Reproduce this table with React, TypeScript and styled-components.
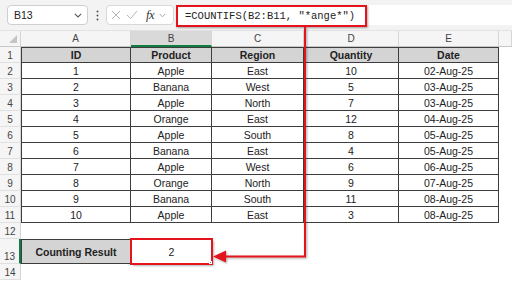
import React from "react";
import styled, { createGlobalStyle, css } from "styled-components";

const GlobalStyle = createGlobalStyle`
  html, body { margin: 0; padding: 0; background: #ffffff; }
  body { font-family: "Liberation Sans", Arial, sans-serif; color: #222; }
  * { box-sizing: border-box; }
`;

const Page = styled.div`
  position: relative;
  width: 512px;
  height: 281px;
  overflow: hidden;
  background: #fff;
`;

const FormulaBar = styled.div`
  height: 31px;
  display: flex;
  align-items: flex-start;
  padding: 5px 0 0 7px;
  background: #f3f3f3;
  border-bottom: 1px solid #e2e2e2;
`;

const NameBox = styled.div`
  width: 81px;
  height: 20px;
  background: #fff;
  border: 1px solid #cfcfcf;
  border-radius: 4px;
  display: flex;
  align-items: center;
  justify-content: space-between;
  padding: 0 5px 0 6px;
  font-size: 10.5px;
  color: #222;
`;

const Dots = styled.div`
  width: 18px;
  height: 20px;
  display: flex;
  align-items: center;
  justify-content: center;
`;

const EditBox = styled.div`
  width: 68px;
  height: 20px;
  background: #fff;
  border: 1px solid #d8d8d8;
  border-radius: 4px;
  display: flex;
  align-items: center;
  padding: 0 3px 0 4px;
  gap: 5px;
`;

const Fx = styled.span`
  font-family: "Liberation Serif", "Times New Roman", serif;
  font-style: italic;
  font-size: 12.5px;
  color: #333;
  margin-left: 3px;
  letter-spacing: -0.5px;
`;

const FormulaInput = styled.div`
  flex: 1;
  margin-left: 2px;
  height: 20px;
  background: #fff;
  border-radius: 4px 0 0 4px;
  display: flex;
  align-items: flex-start;
`;

const Highlight = styled.div`
  width: 191px;
  height: 22px;
  margin-left: 0;
  border: 2px solid #e5141c;
  box-shadow: 1px 1px 2px rgba(0, 0, 0, 0.35);
  background: #fff;
  display: flex;
  align-items: center;
  padding-left: 7px;
  font-family: "Liberation Mono", "Courier New", monospace;
  font-size: 10.5px;
  color: #222;
  white-space: pre;
`;

const Sheet = styled.div`
  display: grid;
  grid-template-columns: 21px 110px 81px 92px 95px 100px 1fr;
  grid-template-rows: 16px repeat(12, 16px) 25px 16px;
`;

const Corner = styled.div`
  position: relative;
  background: #f5f5f5;
  border-right: 1px solid #d4d4d4;
  border-bottom: 1px solid #c8c8c8;
  display: flex;
  align-items: flex-end;
  justify-content: flex-end;
  padding: 0 3px 3px 0;
`;

const ColHead = styled.div<{ $active?: boolean }>`
  background: ${(p) => (p.$active ? "#d9d9d9" : "#f5f5f5")};
  border-right: 1px solid #d6d6d6;
  border-bottom: ${(p) => (p.$active ? "2px solid #107c41" : "1px solid #c8c8c8")};
  display: flex;
  align-items: center;
  justify-content: center;
  font-size: 10px;
  color: #444;
`;

const RowHead = styled.div<{ $active?: boolean }>`
  background: #f5f5f5;
  border-right: ${(p) => (p.$active ? "2px solid #107c41" : "1px solid #d4d4d4")};
  border-bottom: 1px solid #e0e0e0;
  display: flex;
  align-items: flex-end;
  justify-content: center;
  padding-bottom: 1px;
  font-size: 10px;
  color: #444;
`;

type Kind = "th" | "td" | "blank" | "label" | "result";

const Cell = styled.div<{ $kind: Kind; $first?: boolean; $top?: boolean }>`
  display: flex;
  align-items: center;
  justify-content: center;
  font-size: 10.5px;
  color: #222;
  white-space: nowrap;
  ${(p) =>
    (p.$kind === "th" || p.$kind === "td") &&
    css`
      border-right: 1px solid #3d3d3d;
      border-bottom: 1px solid #3d3d3d;
      ${p.$first && "border-left: 1px solid #3d3d3d;"}
      ${p.$top && "border-top: 1px solid #3d3d3d;"}
    `}
  ${(p) =>
    (p.$kind === "th" || p.$kind === "label") &&
    css`
      background: #d4d4d4;
      font-weight: bold;
    `}
  ${(p) =>
    p.$kind === "label" &&
    css`
      border: 1px solid #3d3d3d;
    `}
  ${(p) =>
    p.$kind === "result" &&
    css`
      position: relative;
      background: #fff;
      outline: 2px solid #e5141c;
      outline-offset: -1px;
      box-shadow: 2px 2px 2px rgba(0, 0, 0, 0.3);
    `}
`;

const FillHandle = styled.span`
  position: absolute;
  right: 0px;
  bottom: 0px;
  width: 3px;
  height: 3px;
  background: #7a7a7a;
  border: 0.5px solid #fff;
`;

const Overlay = styled.svg`
  position: absolute;
  left: 0;
  top: 0;
  pointer-events: none;
  filter: drop-shadow(1px 1px 1px rgba(0, 0, 0, 0.35));
`;

const cols = ["A", "B", "C", "D", "E", ""];
const header = ["ID", "Product", "Region", "Quantity", "Date"];
const data: [number, string, string, number, string][] = [
  [1, "Apple", "East", 10, "02-Aug-25"],
  [2, "Banana", "West", 5, "03-Aug-25"],
  [3, "Apple", "North", 7, "03-Aug-25"],
  [4, "Orange", "East", 12, "04-Aug-25"],
  [5, "Apple", "South", 8, "05-Aug-25"],
  [6, "Banana", "East", 4, "05-Aug-25"],
  [7, "Apple", "West", 6, "06-Aug-25"],
  [8, "Orange", "North", 9, "07-Aug-25"],
  [9, "Banana", "South", 11, "08-Aug-25"],
  [10, "Apple", "East", 3, "08-Aug-25"],
];

const Chevron = () => (
  <svg width="8" height="5" viewBox="0 0 8 5">
    <path d="M0.8 0.8 L4 4 L7.2 0.8" fill="none" stroke="#555" strokeWidth="1.1" />
  </svg>
);

export default function App() {
  return (
    <Page>
      <GlobalStyle />
      <FormulaBar>
        <NameBox>
          <span>B13</span>
          <Chevron />
        </NameBox>
        <Dots>
          <svg width="3" height="11" viewBox="0 0 3 11">
            <circle cx="1.5" cy="1.5" r="1" fill="#555" />
            <circle cx="1.5" cy="5.5" r="1" fill="#555" />
            <circle cx="1.5" cy="9.5" r="1" fill="#555" />
          </svg>
        </Dots>
        <EditBox>
          <svg width="10" height="10" viewBox="0 0 10 10">
            <path d="M1 1 L9 9 M9 1 L1 9" stroke="#b5b5b5" strokeWidth="1" />
          </svg>
          <svg width="12" height="10" viewBox="0 0 12 10">
            <path d="M1 5 L4.5 8.5 L11 1" fill="none" stroke="#b5b5b5" strokeWidth="1" />
          </svg>
          <Fx>fx</Fx>
          <svg width="7" height="5" viewBox="0 0 8 5">
            <path d="M0.8 0.8 L4 4 L7.2 0.8" fill="none" stroke="#999" strokeWidth="1" />
          </svg>
        </EditBox>
        <FormulaInput>
          <Highlight>=COUNTIFS(B2:B11, "*ange*")</Highlight>
        </FormulaInput>
      </FormulaBar>
      <Sheet>
        <Corner>
          <svg width="8" height="8" viewBox="0 0 8 8">
            <polygon points="8,0 8,8 0,8" fill="#c4c4c4" />
          </svg>
        </Corner>
        {cols.map((c, i) => (
          <ColHead key={"h" + i} $active={c === "B"}>
            {c}
          </ColHead>
        ))}
        <RowHead>1</RowHead>
        {header.map((h, i) => (
          <Cell key={"th" + i} $kind="th" $first={i === 0} $top>
            {h}
          </Cell>
        ))}
        <Cell $kind="blank" />
        {data.map((row, r) => (
          <React.Fragment key={"r" + r}>
            <RowHead>{r + 2}</RowHead>
            {row.map((v, i) => (
              <Cell key={i} $kind="td" $first={i === 0}>
                {v}
              </Cell>
            ))}
            <Cell $kind="blank" />
          </React.Fragment>
        ))}
        <RowHead>12</RowHead>
        {cols.map((_, i) => (
          <Cell key={"b12" + i} $kind="blank" />
        ))}
        <RowHead $active>13</RowHead>
        <Cell $kind="label">Counting Result</Cell>
        <Cell $kind="result">
          2
          <FillHandle />
        </Cell>
        {cols.slice(2).map((_, i) => (
          <Cell key={"b13" + i} $kind="blank" />
        ))}
        <RowHead>14</RowHead>
        {cols.map((_, i) => (
          <Cell key={"b14" + i} $kind="blank" />
        ))}
      </Sheet>
      <Overlay width="512" height="281" viewBox="0 0 512 281">
        <path d="M305 27 V256.5 H222" fill="none" stroke="#e5141c" strokeWidth="2" />
        <polygon points="213,256.5 226,250.5 226,262.5" fill="#e5141c" />
      </Overlay>
    </Page>
  );
}
